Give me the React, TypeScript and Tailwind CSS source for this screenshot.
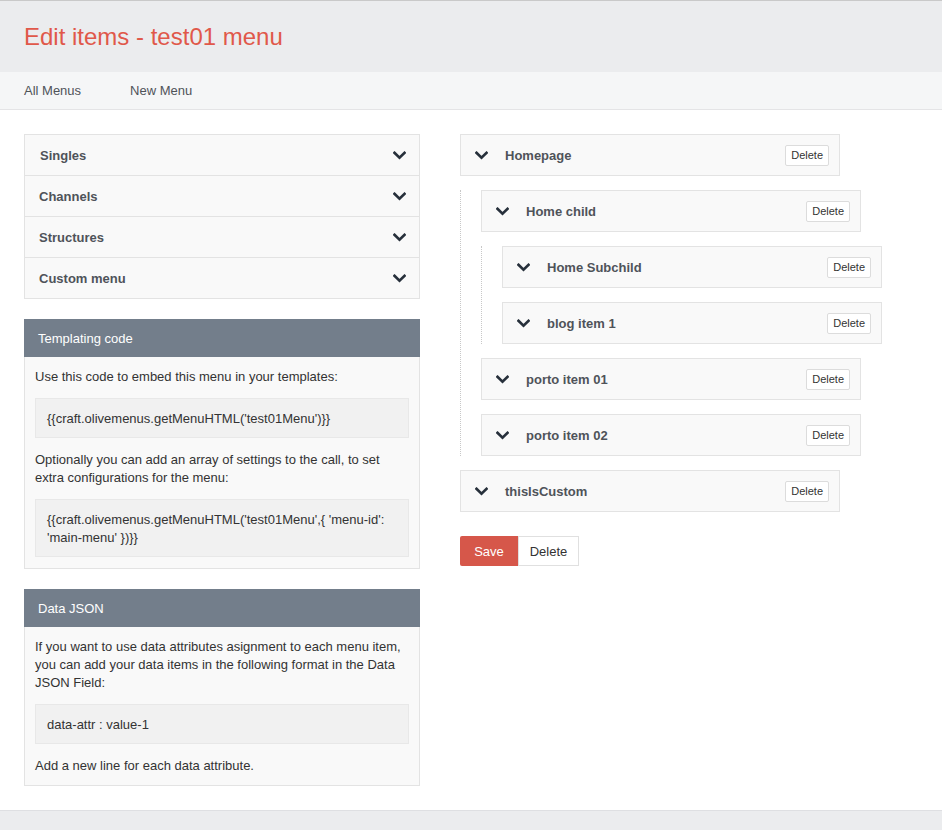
type Item = { label: string; children?: Item[] };

const tree: Item[] = [
  {
    label: "Homepage",
    children: [
      {
        label: "Home child",
        children: [{ label: "Home Subchild" }, { label: "blog item 1" }],
      },
      { label: "porto item 01" },
      { label: "porto item 02" },
    ],
  },
  { label: "thisIsCustom" },
];

function Chevron() {
  return (
    <svg width="13" height="9" viewBox="0 0 13 9" fill="none">
      <path
        d="M1.5 1.8 L6.5 6.6 L11.5 1.8"
        stroke="#27303b"
        strokeWidth="2.6"
        strokeLinecap="square"
      />
    </svg>
  );
}

function TreeList({ items, nested }: { items: Item[]; nested?: boolean }) {
  return (
    <ol
      className={
        nested
          ? "mt-[14px] flex flex-col gap-[14px] border-l border-dotted border-[#c8c8c8] pl-5"
          : "flex flex-col gap-[14px]"
      }
    >
      {items.map((item) => (
        <li key={item.label}>
          <div className="flex h-[42px] w-[380px] items-center border border-[#e3e3e3] bg-[#f9f9f9] pl-[14px] pr-[10px] pt-px">
            <Chevron />
            <span className="ml-[17px] flex-1 text-[13px] font-bold text-[#4f5359]">
              {item.label}
            </span>
            <button className="h-[21px] rounded-[2px] border border-[#dcdcdc] bg-white px-[5px] text-[11px] text-[#333]">
              Delete
            </button>
          </div>
          {item.children && <TreeList items={item.children} nested />}
        </li>
      ))}
    </ol>
  );
}

function Panel({ title, children }: { title: string; children: React.ReactNode }) {
  return (
    <div className="border border-[#e3e3e3] bg-[#f9f9f9]">
      <div className="-mx-px -mt-px flex h-[38px] items-center bg-[#737e8b] px-[14px] pt-px text-[13px] text-white">
        {title}
      </div>
      <div className="px-[10px] pt-[11px] pb-[10px] text-[13px] leading-[18px] text-[#333]">
        {children}
      </div>
    </div>
  );
}

function CodeBox({ children, last }: { children: React.ReactNode; last?: boolean }) {
  return (
    <div
      className={
        last
          ? "mt-[12px] mb-px border border-[#e8e8e8] bg-[#f1f1f1] px-[11px] pt-[11px] pb-[9px] text-[13px] leading-[18px] text-[#333]"
          : "mt-[12px] mb-[13px] border border-[#e8e8e8] bg-[#f1f1f1] px-[11px] pt-[11px] pb-[9px] text-[13px] leading-[18px] text-[#333]"
      }
    >
      {children}
    </div>
  );
}

export default function App() {
  const sections = ["Singles", "Channels", "Structures", "Custom menu"];

  return (
    <div className="min-h-screen bg-white font-['Liberation_Sans',Arial,sans-serif]">
      <header className="flex h-[72px] items-center border-t border-[#c9c9c9] bg-[#ebecee] px-6">
        <h1 className="text-[24px] text-[#e0584a]">Edit items - test01 menu</h1>
      </header>
      <nav className="flex h-[38px] items-center gap-[49px] border-b border-[#e4e4e6] bg-[#f5f6f7] px-6 pt-px text-[13px] text-[#4f5359]">
        <span>All Menus</span>
        <span>New Menu</span>
      </nav>

      <main className="flex gap-10 px-6 pt-6">
        <div className="flex w-[396px] flex-col gap-5">
          <div className="border border-[#e3e3e3] bg-[#f9f9f9]">
            {sections.map((s, i) => (
              <div
                key={s}
                className={
                  i === 0
                    ? "flex h-[40px] items-center justify-between pl-[15px] pr-[13px] pt-px"
                    : "flex h-[41px] items-center justify-between border-t border-[#e3e3e3] pl-[14px] pr-[13px] pt-px"
                }
              >
                <span className="text-[13px] font-bold text-[#4f5359]">{s}</span>
                <Chevron />
              </div>
            ))}
          </div>

          <Panel title="Templating code">
            <p>Use this code to embed this menu in your templates:</p>
            <CodeBox>{"{{craft.olivemenus.getMenuHTML('test01Menu')}}"}</CodeBox>
            <p>
              Optionally you can add an array of settings to the call, to set
              extra configurations for the menu:
            </p>
            <CodeBox last>
              {"{{craft.olivemenus.getMenuHTML('test01Menu',{ 'menu-id': 'main-menu' })}}"}
            </CodeBox>
          </Panel>

          <Panel title="Data JSON">
            <p>
              If you want to use data attributes asignment to each menu item,
              you can add your data items in the following format in the Data
              JSON Field:
            </p>
            <CodeBox>data-attr : value-1</CodeBox>
            <p>Add a new line for each data attribute.</p>
          </Panel>
        </div>

        <div className="flex flex-col">
          <TreeList items={tree} />
          <div className="mt-6 flex">
            <button className="h-[30px] w-[58px] rounded-l-[2px] bg-[#d6574a] pt-px text-[13px] text-white">
              Save
            </button>
            <button className="h-[30px] w-[61px] border border-[#e0e0e0] bg-white pt-px text-[13px] text-[#333]">
              Delete
            </button>
          </div>
        </div>
      </main>

      <footer className="mt-6 h-[40px] border-t border-[#dedfe2] bg-[#ebecee]" />
    </div>
  );
}
